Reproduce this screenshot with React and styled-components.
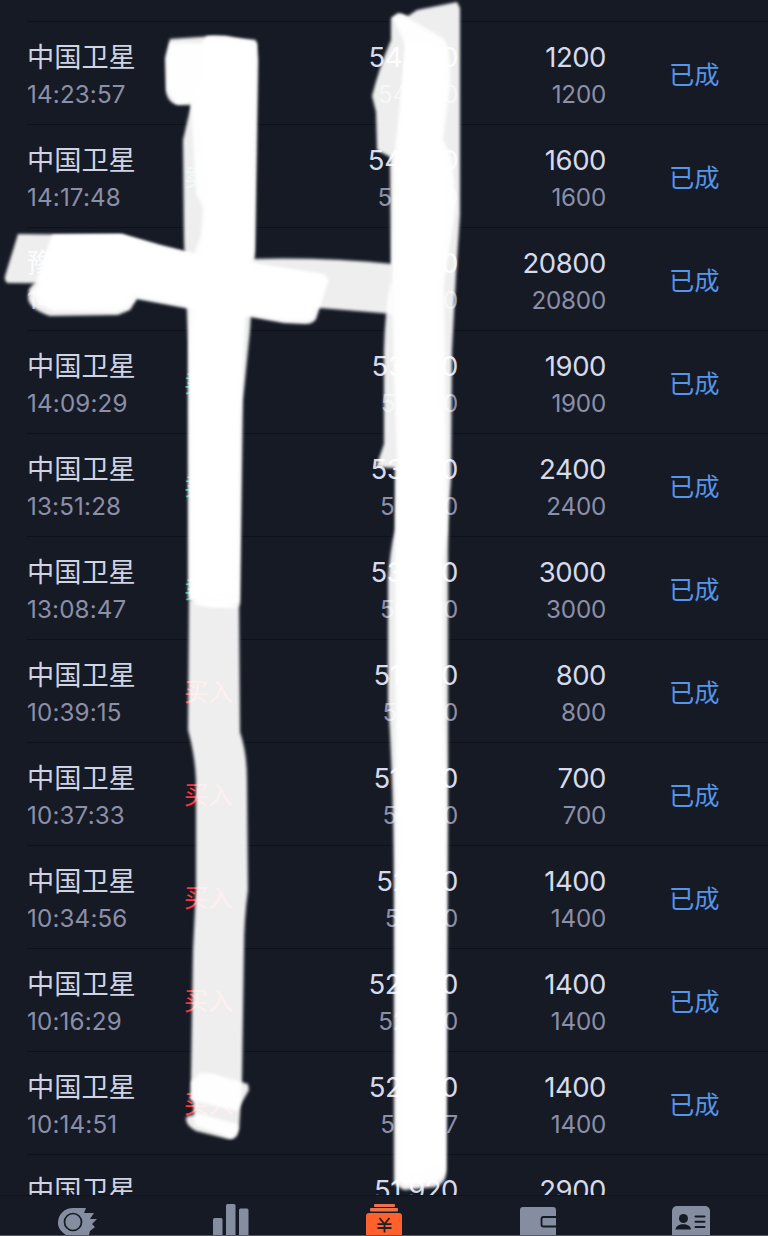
import styled, { createGlobalStyle } from "styled-components";

const GlobalStyle = createGlobalStyle`
  * {
    box-sizing: border-box;
  }

  body {
    margin: 0;
    background: #161a24;
  }
`;

const Screen = styled.div`
  position: relative;
  display: flex;
  flex-direction: column;
  width: 768px;
  height: 1236px;
  overflow: hidden;
  background: #161a24;
  color: #d7daea;
  font-family: Inter, "Noto Sans CJK SC", sans-serif;
`;

const List = styled.div`
  flex: 1;
  min-height: 0;
  overflow: hidden;
  padding: 21px 0 0 27px;
`;

const Row = styled.div`
  display: grid;
  grid-template-columns: 157px 121px 153px 148px 63px 1fr;
  height: 103px;
  border-top: 1px solid #0e1119;
`;

const Cell = styled.div`
  display: flex;
  flex-direction: column;
  align-items: ${(p) => (p.$right ? "flex-end" : "flex-start")};
  padding-top: 16px;
  white-space: nowrap;
`;

const Name = styled.div`
  font-size: 27.2px;
  line-height: 39px;
  font-weight: 400;
  color: #d0d3e2;
`;

const Main = styled.div`
  font-size: 27.5px;
  line-height: 39px;
  letter-spacing: -0.45px;
`;

const Sub = styled.div`
  font-size: 24.2px;
  line-height: 36px;
  letter-spacing: ${(p) => (p.$time ? "0.15px" : "-0.2px")};
  color: #8b8fa8;
`;

const Side = styled.div`
  padding-top: 33px;
  font-size: 24.5px;
  line-height: 38px;
  font-weight: 400;
  color: ${(p) => (p.$buy ? "#ff3338" : "#25b394")};
`;

const Status = styled.div`
  grid-column: 6;
  padding-top: 34px;
  font-size: 25.3px;
  line-height: 38px;
  font-weight: 400;
  color: #5595ea;
`;

const TabBar = styled.div`
  display: grid;
  grid-template-columns: repeat(5, 1fr);
  height: 41px;
  border-top: 1px solid #10131b;
  border-bottom: 1px solid #555667;
  background: #161a24;
`;

const Tab = styled.div`
  display: flex;
  justify-content: center;
  overflow: hidden;

  svg {
    flex: none;
  }
`;

const Marker = styled.svg`
  position: absolute;
  inset: 0;
  pointer-events: none;
`;

const orders = [
  { name: "中国卫星", time: "14:23:57", side: "卖出", price: "54.020", avg: "54.020", qty: 1200 },
  { name: "中国卫星", time: "14:17:48", side: "卖出", price: "54.000", avg: "54.000", qty: 1600 },
  { name: "豫能控股", time: "14:12:36", side: "卖出", price: "5.150", avg: "5.150", qty: 20800 },
  { name: "中国卫星", time: "14:09:29", side: "卖出", price: "53.770", avg: "53.770", qty: 1900 },
  { name: "中国卫星", time: "13:51:28", side: "卖出", price: "53.760", avg: "53.760", qty: 2400 },
  { name: "中国卫星", time: "13:08:47", side: "卖出", price: "53.780", avg: "53.780", qty: 3000 },
  { name: "中国卫星", time: "10:39:15", side: "买入", price: "51.990", avg: "51.990", qty: 800 },
  { name: "中国卫星", time: "10:37:33", side: "买入", price: "51.990", avg: "51.990", qty: 700 },
  { name: "中国卫星", time: "10:34:56", side: "买入", price: "52.130", avg: "52.130", qty: 1400 },
  { name: "中国卫星", time: "10:16:29", side: "买入", price: "52.680", avg: "52.680", qty: 1400 },
  { name: "中国卫星", time: "10:14:51", side: "买入", price: "52.620", avg: "52.597", qty: 1400 },
  { name: "中国卫星", time: "10:12:08", side: "买入", price: "51.920", avg: "51.920", qty: 2900 },
];

const strokes = [
  // left column
  "M170 39 L215 36 L256 40 L258 60 L255 250 L250 330 L243 400 L240 604 Q238 609 225 608 L196 605 L188 598 L188 340 L184 240 L183 140 L191 105 L178 105 Q168 103 166 92 L165 58 Z",
  "M170 43 L202 43 L207 36 L226 36 L257 43 L254 250 L244 322 L240 420 L239 602 Q225 609 205 606 L190 599 L189 340 L192 260 L201 235 L203 207 L196 194 L191 102 L176 104 L167 90 L167 58 Z",
  "M189 600 L239 604 L240 732 Q247 752 247 780 L248 890 Q244 920 244 950 L242 1080 L239 1130 L232 1138 L195 1125 L191 1080 L193 950 L196 890 L196 780 Q195 755 188 730 Z",
  "M200 1073 L210 1073 L248 1084 L249 1090 L237 1111 L190 1100 L191 1082 Z",
  "M188 1116 L200 1114 L237 1124 L238 1133 Q236 1140 228 1139 L196 1131 Q185 1125 186 1118 Z",
  // across
  "M18 234 L120 235 L150 247 L130 284 L8 283 Q4 281 5 276 Z",
  "M52 235 L122 234 L160 245 L200 255 L258 264 L323 274 Q329 276 328 282 L316 319 Q313 324 306 324 L284 323 L245 316 L185 308 L137 299 L130 310 L118 315 L50 316 Q29 309 28 298 L29 289 L36 281 Z",
  "M252 259 Q320 257 393 264 L393 314 L320 308 L250 302 Z",
  // right column
  "M408 16 L417 10 L457 2 L460 8 L460 215 L456 275 L452 350 L451 480 Q448 515 448 550 L448 800 L446 1174 Q445 1184 435 1187 L404 1190 L394 1184 L394 900 Q394 790 388 700 L388 580 Q390 550 395 530 L395 468 L376 467 L384 444 L384 350 Q385 310 391 280 L390 157 L377 150 L376 112 L372 96 Q379 68 391 40 L391 18 L398 13 Z",
  "M393 18 L401 14 L443 38 Q451 46 450 85 L443 140 L452 158 L456 205 L444 285 L445 340 L447 530 L443 560 L443 680 L446 780 L446 1170 Q443 1181 430 1183 L404 1186 L397 1180 L396 880 L396 790 L395 560 L397 460 L394 380 L392 280 L394 158 L400 105 L406 46 Z",
];

// parts brushed over more than once
const solid = [
  "M206 40 L252 42 L249 250 L238 420 L237 594 L194 594 L193 340 L204 240 L208 190 L197 105 Z",
  "M54 236 L122 235 L160 246 L200 256 L258 265 L322 275 L326 281 L314 318 L306 322 L284 321 L245 314 L185 306 L136 297 L128 308 L116 312 L54 311 L38 304 L33 292 L40 281 Z",
  "M54 238 L122 237 L160 248 L200 258 L258 267 L318 277 L310 318 L284 318 L245 312 L185 303 L134 293 L125 305 L60 308 L42 300 L38 290 L46 270 Z",
  "M405 42 L446 48 L439 140 L447 164 L447 210 L437 300 L443 540 L440 600 L441 1164 L404 1176 L400 780 L400 320 L398 170 Z",
];

const StrokeOverlay = () => (
  <Marker width="768" height="1236" viewBox="0 0 768 1236">
    <defs>
      <filter id="brush" x="-5%" y="-5%" width="110%" height="110%">
        <feGaussianBlur stdDeviation="1.8" />
      </filter>
    </defs>
    {strokes.map((d) => (
      <path key={d} d={d} fill="#fff" fillOpacity=".925" filter="url(#brush)" />
    ))}
    {solid.map((d) => (
      <path key={d} d={d} fill="#fff" fillOpacity=".9" filter="url(#brush)" />
    ))}
  </Marker>
);

const DiscIcon = () => (
  <svg width="42" height="40" viewBox="0 0 42 40" fill="#858da1">
    <path d="M17 12H30L28 17H38L34 23H41L36 28L39 31L34 35L33 39H10C4 35 2 31 2 27C2 18 9 12 17 12Z" />
    <circle cx="17" cy="26" r="8.5" stroke="#161a24" strokeWidth="1.7" />
  </svg>
);

const BarsIcon = () => (
  <svg width="38" height="40" viewBox="0 0 38 40" fill="#858da1">
    <rect x="2" y="22" width="9.5" height="24" rx="1.5" />
    <rect x="15" y="8" width="9.5" height="38" rx="1.5" />
    <rect x="28" y="12.5" width="9.5" height="33" rx="1.5" />
  </svg>
);

const TradeIcon = () => (
  <svg width="36" height="40" viewBox="0 0 36 40">
    <g fill="#ed714b">
      <rect x="8" y="8" width="21" height="3" rx="1" />
      <rect x="4" y="12" width="28" height="3.5" rx="1" />
    </g>
    <path d="M3 17H33Q36 17 36 20V40H0V20Q0 17 3 17Z" fill="#ff602c" />
    <path d="M13.5 22L18.5 28L23.5 22M11.5 28.2H25.5M11.5 32H25.5M18.5 28V36.5" fill="none" stroke="#222027" strokeWidth="1.8" />
  </svg>
);

const WalletIcon = () => (
  <svg width="36" height="40" viewBox="0 0 36 40" fill="#858da1">
    <path d="M3 11H33Q36 11 36 14V40H0V14Q0 11 3 11Z" />
    <path d="M37 21H23.5Q21.5 21 21.5 23V28.5Q21.5 30.5 23.5 30.5H37" stroke="#161a24" strokeWidth="1.8" />
  </svg>
);

const CardIcon = () => (
  <svg width="38" height="40" viewBox="0 0 38 40">
    <rect x="0" y="10" width="38" height="36" rx="5" fill="#858da1" />
    <circle cx="11.5" cy="22.5" r="4.5" fill="#161a24" />
    <path d="M3.5 33.5C4 26.5 18.5 26.5 19 33.5Z" fill="#161a24" />
    <path d="M23.5 20.5H32.5M23.5 25.7H32.5M23.5 31H32.5" stroke="#161a24" strokeWidth="2" strokeLinecap="round" />
  </svg>
);

const App = () => {
  return (
    <Screen>
      <GlobalStyle />
      <List>
        {orders.map((order) => (
          <Row key={order.time}>
            <Cell>
              <Name>{order.name}</Name>
              <Sub $time>{order.time}</Sub>
            </Cell>
            <Side $buy={order.side === "买入"}>{order.side}</Side>
            <Cell $right>
              <Main>{order.price}</Main>
              <Sub>{order.avg}</Sub>
            </Cell>
            <Cell $right>
              <Main>{order.qty}</Main>
              <Sub>{order.qty}</Sub>
            </Cell>
            <Status>已成</Status>
          </Row>
        ))}
      </List>
      <TabBar>
        <Tab><DiscIcon /></Tab>
        <Tab><BarsIcon /></Tab>
        <Tab><TradeIcon /></Tab>
        <Tab><WalletIcon /></Tab>
        <Tab><CardIcon /></Tab>
      </TabBar>
      <StrokeOverlay />
    </Screen>
  );
};

export default App;
